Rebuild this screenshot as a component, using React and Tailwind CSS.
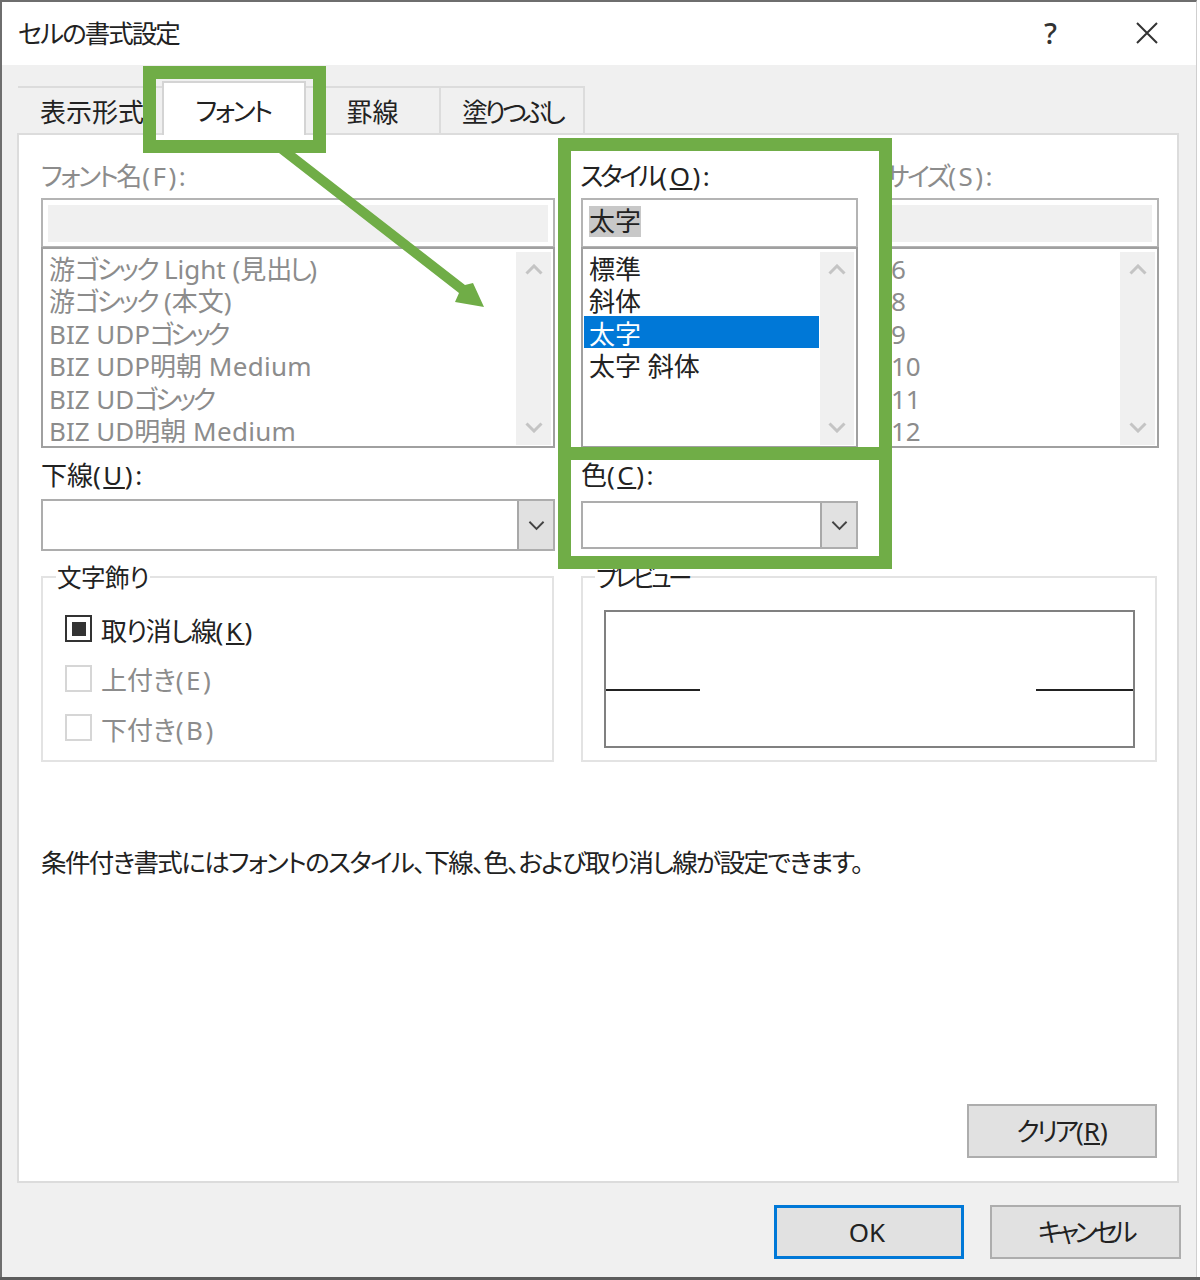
import React from "react";

const K = ({ children, t = "tracking-[-2.5px]" }) => <span className={t}>{children}</span>;
const L = ({ children }) => <span className="tracking-[2.5px]">{children}</span>;

const Chevron = ({ up = false, color = "#c4c4c4", w = 18, h = 11, sw = 3 }) => (
  <svg width={w} height={h} viewBox="0 0 18 11" fill="none">
    <path d={up ? "M1.5 9.5 L9 2 L16.5 9.5" : "M1.5 1.5 L9 9 L16.5 1.5"} stroke={color} strokeWidth={sw} />
  </svg>
);

const Track = ({ w }) => (
  <div className={`${w} mt-[3px] mb-px mr-[2px] shrink-0 bg-[#f0f0f0] flex flex-col items-center justify-between py-[12px]`}>
    <Chevron up />
    <Chevron />
  </div>
);

const ListBox = ({ items, disabled, selected, pad, rowMargin, selWidth, trackW }) => (
  <div className="h-[201px] -mt-px border-2 border-[#a0a0a0] flex bg-white overflow-hidden">
    <div className="flex-1 min-w-0 pt-[2px]">
      {items.map((t, i) => (
        <div
          key={i}
          className={`h-[32.4px] pt-[4px] leading-[28px] whitespace-nowrap ${rowMargin} ${pad} ${
            i === selected ? "bg-[#0078d7] text-white " + selWidth : disabled ? "text-[#8c8c8c]" : "text-[#222]"
          }`}
        >
          {t}
        </div>
      ))}
    </div>
    <Track w={trackW} />
  </div>
);

const Select = ({ h, btn }) => (
  <div className={`${h} border-2 border-[#adadad] bg-white flex justify-end`}>
    <div className={`${btn} bg-[#e1e1e1] border-l-2 border-[#a8a8a8] flex items-center justify-center`}>
      <Chevron color="#444" w={17} h={11} sw={2} />
    </div>
  </div>
);

const Legend = ({ children, left }) => (
  <div className={`absolute -top-[18px] ${left} px-px bg-white h-[36px] leading-[36px] text-[24.5px] text-[#222] tracking-[-0.5px]`}>
    {children}
  </div>
);

const Check = ({ label, on }) => (
  <div className="flex items-center h-[27px] gap-[9px]">
    <div
      className={`w-[27px] h-[27px] border-2 flex items-center justify-center ${on ? "border-[#333] bg-white" : "border-[#d6d6d6] bg-white"}`}
    >
      {on && <div className="w-[14px] h-[14px] bg-[#333]" />}
    </div>
    <span className={`mt-[4px] ${on ? "text-[#222]" : "text-[#8c8c8c]"}`}>{label}</span>
  </div>
);

const Button = ({ children, className }) => (
  <div className={`flex items-center justify-center bg-[#e1e1e1] text-[#222] ${className}`}>{children}</div>
);

export default function App() {
  return (
    <div className="relative w-[1200px] h-[1280px] bg-white border-b-[3px] border-[#5c5c5c] font-['Noto_Sans','Noto_Sans_CJK_JP',sans-serif] text-[26px] leading-[36px] [font-feature-settings:'palt'] overflow-hidden">
      <div className="w-[1197px] h-full flex flex-col border-l-2 border-t-2 border-r border-[#6e6e6e] border-r-[#cfcfcf]">
        {/* title bar */}
        <div className="h-[63px] shrink-0 bg-white flex items-center pl-[16px] pr-[37px] text-[#222]">
          <span className="flex-1 text-[25.5px] -mt-[2px] tracking-[-2px]">セルの書式設定</span>
          <span className="mr-[78px] text-[29px] -mt-[2px] font-medium text-[#333]">?</span>
          <svg width="24" height="24" viewBox="0 0 24 24" className="-mt-[2px]" fill="none">
            <path d="M2 2 L22 22 M22 2 L2 22" stroke="#333" strokeWidth="2" />
          </svg>
        </div>

        {/* body */}
        <div className="flex-1 bg-[#f0f0f0] flex flex-col pl-[15px]">
          {/* tabs */}
          <div className="mt-[21px] ml-px h-[47px] flex items-end text-[#222]">
            <div className="w-[144px] h-[47px] border-t-2 border-[#dcdcdc] flex items-center justify-center pt-[3px] pl-[4px]">表示形式</div>
            <div className="relative z-10 w-[144px] h-[54px] -mb-[2px] bg-white border-t-2 border-x-2 border-[#d4d4d4] flex items-center justify-center pt-[3px] pr-[2px] tracking-[-2.5px]">フォント</div>
            <div className="w-[135px] h-[47px] border-t-2 border-r-2 border-[#dcdcdc] flex items-center justify-center pt-[3px]">罫線</div>
            <div className="w-[144px] h-[47px] border-t-2 border-r-2 border-[#dcdcdc] flex items-center justify-center pt-[3px] tracking-[-3.8px]">塗りつぶし</div>
          </div>

          {/* panel */}
          <div className="w-[1162px] h-[1050px] bg-white border-2 border-[#dcdcdc] pl-[22px] pr-[18px] pt-[23px] pb-[23px] flex flex-col">
            <div className="flex gap-[26px]">
              <div className="w-[514px]">
                <div className="text-[#8c8c8c] h-[36px]"><K>フォント</K>名<L>(F):</L></div>
                <div className="mt-[4px] h-[50px] border-2 border-[#b4b4b4] p-[5px] pb-[4px]">
                  <div className="h-full bg-[#f0f0f0]" />
                </div>
                <ListBox
                  disabled
                  items={[
                    <>游<K>ゴシック</K> Light (見<K>出し</K>)</>,
                    <>游<K>ゴシック</K> (本文)</>,
                    <>BIZ UDP<K t="tracking-[-4px]">ゴシック</K></>,
                    <>BIZ UDP明朝 <span className="tracking-[0.3px]">Medium</span></>,
                    <>BIZ UD<K t="tracking-[-3.5px]">ゴシック</K></>,
                    <>BIZ UD明朝 <span className="tracking-[0.3px]">Medium</span></>,
                  ]}
                  pad="pl-[5px]"
                  rowMargin="ml-px"
                  trackW="w-[35px]"
                />
              </div>
              <div className="w-[277px]">
                <div className="text-[#222] h-[36px] -ml-px"><K t="tracking-[-3.5px]">スタイル</K><L>(<u>O</u>):</L></div>
                <div className="mt-[4px] h-[50px] border-2 border-[#b4b4b4] bg-white px-[6px] pt-[3px]">
                  <span className="inline-block h-[31px] leading-[31px] bg-[#c8c8c8] text-[#222]">太字</span>
                </div>
                <ListBox
                  items={["標準", "斜体", "太字", "太字 斜体"]}
                  selected={2}
                  pad="pl-[5px]"
                  rowMargin="ml-px"
                  selWidth="w-[235px]"
                  trackW="w-[34px]"
                />
              </div>
              <div className="w-[279px] -ml-[4px]">
                <div className="text-[#8c8c8c] h-[36px] ml-[5px]"><K>サイズ</K><L>(S):</L></div>
                <div className="mt-[4px] h-[50px] border-2 border-[#b4b4b4] p-[5px] pb-[4px]">
                  <div className="h-full bg-[#f0f0f0]" />
                </div>
                <ListBox disabled items={["6", "8", "9", "10", "11", "12"]} pad="pl-[8px]" rowMargin="ml-px" trackW="w-[35px]" />
              </div>
            </div>

            <div className="mt-[10px] flex gap-[26px]">
              <div className="w-[514px]">
                <div className="text-[#222] h-[36px] leading-[35px]">下線<L>(<u>U</u>):</L></div>
                <div className="mt-[5px]">
                  <Select h="h-[52px]" btn="w-[36px]" />
                </div>
              </div>
              <div className="w-[277px]">
                <div className="text-[#222] h-[36px] leading-[35px]">色<L>(<u>C</u>):</L></div>
                <div className="mt-[7px]">
                  <Select h="h-[48px]" btn="w-[36px]" />
                </div>
              </div>
            </div>

            <div className="mt-[25px] flex gap-[27px]">
              <div className="relative w-[513px] h-[186px] border-2 border-[#e3e3e3] pl-[22px] pt-[37px] flex flex-col gap-[22.5px]">
                <Legend left="left-[13px]">文字飾り</Legend>
                <Check on label={<><K t="tracking-[-1.4px]">取り消し線</K><L>(<u>K</u>)</L></>} />
                <Check label={<>上付き<L>(E)</L></>} />
                <Check label={<>下付き<L>(B)</L></>} />
              </div>
              <div className="relative w-[576px] h-[186px] border-2 border-[#e3e3e3] pl-[21px] pr-[20px] pt-[32px]">
                <Legend left="left-[12px]"><K t="tracking-[-3.8px]">プレビュー</K></Legend>
                <div className="h-[138px] border-2 border-[#808080] flex items-center justify-between pt-[22px]">
                  <div className="w-[94px] h-[2px] bg-[#222]" />
                  <div className="w-[97px] h-[2px] bg-[#222]" />
                </div>
              </div>
            </div>

            <div className="mt-[82px] text-[#222] text-[25.5px] h-[36px] whitespace-nowrap tracking-[-1.6px]">
              条件付き書式にはフォントのスタイル、下線、色、および取り消し線が設定できます。
            </div>

            <div className="mt-auto self-end mr-[2px]">
              <Button className="w-[190px] h-[54px] border-2 border-[#adadad]">
                <span><K t="tracking-[-3px]">クリア</K>(<u>R</u>)</span>
              </Button>
            </div>
          </div>

          {/* dialog buttons */}
          <div className="mt-[22px] flex justify-end gap-[26px] pr-[15px]">
            <Button className="w-[190px] h-[54px] border-[3px] border-[#0078d7] pr-[4px]">OK</Button>
            <Button className="w-[191px] h-[54px] border-2 border-[#adadad] tracking-[-4.5px]">キャンセル</Button>
          </div>
        </div>
      </div>

      {/* annotation overlays */}
      <div className="absolute z-20 left-[143px] top-[66px] w-[183px] h-[87px] border-[13px] border-[#70ad47]" />
      <div className="absolute z-20 left-[558px] top-[138px] w-[334px] h-[322px] border-[13px] border-[#70ad47]" />
      <div className="absolute z-20 left-[558px] top-[447px] w-[334px] h-[122px] border-[13px] border-[#70ad47]" />
      <svg className="absolute z-20 left-0 top-0 pointer-events-none" width="1200" height="1280" viewBox="0 0 1200 1280" fill="none">
        <path d="M279 153 L295 153 L465 285 L473 283 L484 307 L455 302 L459 293 Z" fill="#70ad47" />
      </svg>
    </div>
  );
}
